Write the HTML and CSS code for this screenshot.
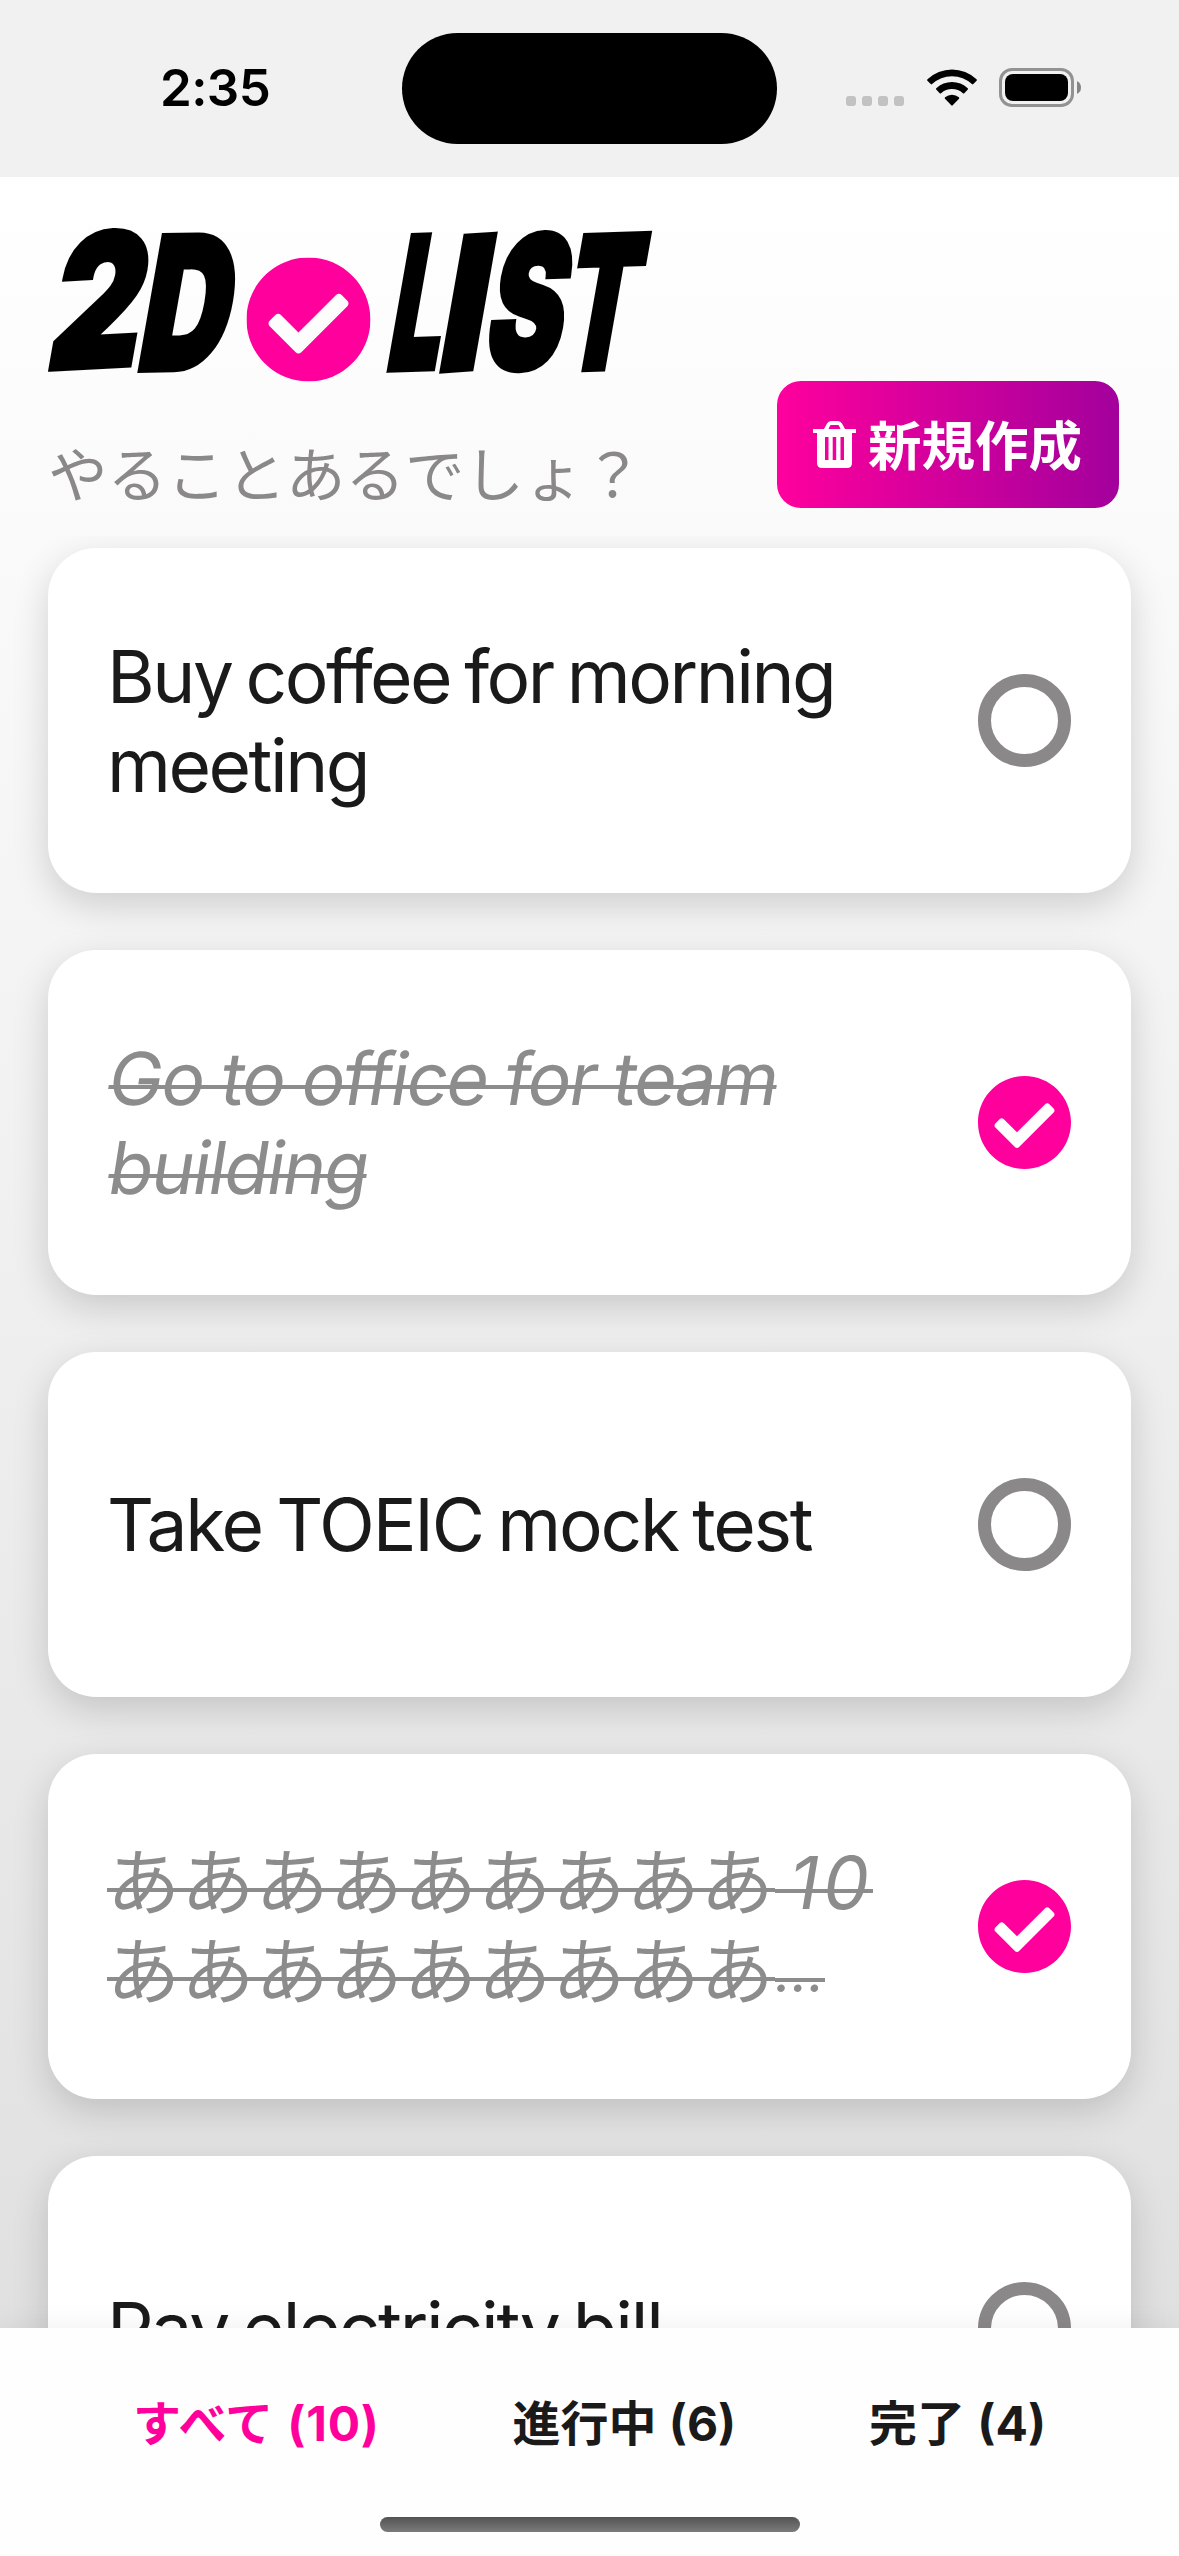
FILE: index.html
```html
<!DOCTYPE html>
<html lang="ja">
<head>
<meta charset="utf-8">
<title>2D LIST</title>
<link rel="stylesheet" href="styles.css">
</head>
<body>
<svg class="defs" aria-hidden="true">
  <symbol id="check" viewBox="8 8 496 496"><path d="M504 256c0 136.967-111.033 248-248 248S8 392.967 8 256 119.033 8 256 8s248 111.033 248 248zM227.314 387.314l184-184c6.248-6.248 6.248-16.379 0-22.627l-22.627-22.627c-6.248-6.249-16.379-6.249-22.628 0L216 308.118l-70.059-70.059c-6.248-6.248-16.379-6.248-22.628 0l-22.627 22.627c-6.248 6.248-6.248 16.379 0 22.627l104 104c6.249 6.249 16.379 6.249 22.628.001z"/></symbol>
</svg>
<div class="screen">
  <div class="status">
    <span class="time">2:35</span>
    <span class="island"></span>
    <div class="indicators">
      <svg class="dots" width="58" height="10" viewBox="0 0 58 10"><rect width="10" height="10" rx="3"/><rect x="16" width="10" height="10" rx="3"/><rect x="32" width="10" height="10" rx="3"/><rect x="48" width="10" height="10" rx="3"/></svg>
      <svg class="wifi" width="50" height="37" viewBox="0 0 50 37"><path d="M.4 11.8Q-.3 11 .5 10.200A35.500 35.500 0 0 1 49.500 10.200Q50.300 11 49.600 11.800L46.300 15.100Q45.600 15.700 44.900 15.100A29 29 0 0 0 5.100 15.100Q4.400 15.700 3.700 15.100Z"/><path d="M9.200 20.600Q8.500 19.900 9.300 19.200A23 23 0 0 1 40.700 19.200Q41.500 19.900 40.800 20.600L37.300 24.200Q36.600 24.800 35.900 24.200A16.300 16.300 0 0 0 14.100 24.200Q13.400 24.800 12.700 24.200Z"/><path d="M18 29.700Q17.300 29 18.100 28.300A10.500 10.500 0 0 1 31.900 28.300Q32.700 29 32 29.700L25.700 36.300Q25 37 24.300 36.300Z"/></svg>
      <svg class="battery" width="83" height="39" viewBox="0 0 83 39"><rect class="shell" x="1.500" y="1.500" width="72" height="36" rx="11.500"/><rect x="6" y="6" width="63" height="27" rx="8"/><path class="nub" d="M78 13Q82 15 82 19.500Q82 24 78 26Z"/></svg>
    </div>
  </div>
  <header class="header">
    <div class="brand">
      <svg class="logo" width="608" height="154" viewBox="0 0 608 154">
        <g class="word">
          <text transform="translate(-4 139) skewX(-10) skewY(-3) scale(.76 1)">2</text>
          <text transform="translate(86 140) skewX(-10) skewY(-1) scale(.67 1)">D</text>
          <text transform="translate(336 140) skewX(-10) skewY(-2) scale(.5 1)">L</text>
          <text transform="translate(387 141) skewX(-10) skewY(-4) scale(.8 1)">I</text>
          <text transform="translate(433 140) skewX(-10) skewY(-2) scale(.62 1)">S</text>
          <text transform="translate(510 140) skewX(-10) skewY(-2) scale(.56 1)">T</text>
        </g>
        <use class="tick" href="#check" x="198.500" y="27.500" width="124" height="124"/>
      </svg>
      <p class="tagline">やることあるでしょ？</p>
    </div>
    <button class="create">
      <svg width="43" height="48" viewBox="0 0 43 48"><path fill-rule="evenodd" d="M0 8h11l3-5.500Q15.500 0 18 0h7q2.500 0 4 2.500L32 8h11v4h-4v30q0 5-5 5H9q-5 0-5-5V12H0ZM15.500 8h12L26 4.700Q25.700 4 25 4h-7q-.7 0-1 .7ZM12 16v23h3.500V16ZM19.700 16v23h3.500V16ZM27.500 16v23H31V16Z"/></svg>
      <span>新規作成</span>
    </button>
  </header>
  <main class="list">
    <article class="card"><p class="tight">Buy coffee for morning<br>meeting</p><span class="ring"></span></article>
    <article class="card done"><p><s class="latin">Go to office for team</s><br><s class="latin">building</s></p><svg class="tick" width="93" height="93"><use href="#check"/></svg></article>
    <article class="card"><p>Take TOEIC mock test</p><span class="ring"></span></article>
    <article class="card done"><p><s class="kana">あああああああああ</s><s class="num"> 10</s><br><s class="kana">あああああああああ</s><s class="more">…</s></p><svg class="tick" width="93" height="93"><use href="#check"/></svg></article>
    <article class="card"><p>Pay electricity bill</p><span class="ring"></span></article>
  </main>
  <nav class="tabs">
    <div class="tab-row">
      <a class="tab active">すべて (10)</a>
      <a class="tab">進行中 (6)</a>
      <a class="tab">完了 (4)</a>
    </div>
    <div class="home"></div>
  </nav>
</div>
</body>
</html>
```
FILE: styles.css
```css
* { box-sizing: border-box; }
body { margin: 0; font-family: Inter, "Noto Sans CJK JP", sans-serif; color: #1a1a1a; }
.defs { position: absolute; width: 0; height: 0; }
.screen {
  width: 1179px; height: 2556px; overflow: hidden;
  display: flex; flex-direction: column;
  background: linear-gradient(#fff 177px, #e0e0e0 2328px);
}
.status {
  height: 177px; flex: none; background: #f1f1f1;
  display: grid; grid-template-columns: 402px 375px 1fr; align-items: start;
}
.time { padding: 57px 0 0 160px; font-size: 51px; line-height: 62px; font-weight: 600; letter-spacing: -.6px; color: #000; }
.island { height: 111px; margin-top: 33px; border-radius: 56px; background: #000; }
.indicators { display: flex; align-items: flex-end; height: 107px; padding-left: 69px; }
.dots { fill: #c2c2c2; margin: 0 23px 1px 0; }
.wifi { margin: 0 22px 1px 0; }
.shell { fill: none; stroke: #929292; stroke-width: 3; }
.nub { fill: #858585; }
.header {
  height: 359px; flex: none; padding: 53px 60px 28px 48px;
  display: flex; justify-content: space-between; align-items: flex-end;
}
.brand { align-self: flex-start; }
.logo { display: block; overflow: visible; }
.word { font-family: Inter, sans-serif; font-weight: 900; font-size: 184px; fill: #000; stroke: #000; stroke-width: 6; }
.tick { fill: #ff009d; flex: none; }
.tagline { margin: 43px 0 0; font-size: 59.500px; line-height: 88px; color: #8a8888; font-family: "Noto Sans CJK JP", sans-serif; }
.create {
  width: 342px; height: 127px; border: 0; padding: 0 0 0 36px; border-radius: 24px;
  display: flex; align-items: center; gap: 12px; color: #fff; fill: #fff;
  font: 700 53.500px/72px "Noto Sans CJK JP", sans-serif;
  background: linear-gradient(90deg, #ff009d, #a3009c);
}
.create span { padding-bottom: 3px; }
.list { flex: 1; min-height: 0; overflow: hidden; padding: 12px 48px 0; display: flex; flex-direction: column; gap: 57px; }
.card {
  height: 345px; flex: none; padding: 0 60px 0 59px; border-radius: 48px; background: #fff;
  display: flex; align-items: center; justify-content: space-between;
  box-shadow: 0 12px 36px rgba(0, 0, 0, .16);
}
.card p { margin: 0; font-size: 73px; line-height: 89px; letter-spacing: -2.200px; word-spacing: -4px; white-space: nowrap; }
.card .tight { letter-spacing: -2.500px; }
.card.done p { color: #8c8c8c; font-style: italic; }
/* The strike sits a little below the font's own line-through position. */
.done s {
  display: inline-block; height: 89px; vertical-align: top; text-decoration: none; white-space: pre;
  background: linear-gradient(#8c8c8c, #8c8c8c) 0 51px / 100% 4px no-repeat;
}
/* Slanted upright letters rather than the true italic, whose f descends. */
.done .latin { font-style: normal; transform: skewX(-9deg); transform-origin: 0 70%; letter-spacing: -1.900px; word-spacing: -1px; }
.done .kana { letter-spacing: 1.200px; font-style: normal; background-position-y: 50px; }
.done .num { letter-spacing: 4px; word-spacing: -10px; }
.done .more { font-size: 58px; width: 50px; letter-spacing: 0; }
.ring { width: 93px; height: 93px; flex: none; border: 13px solid #8a8888; border-radius: 50%; }
.tabs {
  height: 228px; flex: none; background: #fefefe; position: relative;
  display: flex; flex-direction: column; align-items: center; justify-content: space-between;
  padding: 60px 0 24px; box-shadow: 0 -3px 24px rgba(0, 0, 0, .06);
}
.tab-row { width: 100%; padding: 0 133px; display: flex; justify-content: space-between; font-size: 48px; line-height: 72px; font-weight: 700; word-spacing: 1px; }
.tab { white-space: pre; }
.active { color: #ff009d; letter-spacing: .8px; }
.home { width: 420px; height: 15px; border-radius: 8px; background: linear-gradient(#535353, #7b7b7b); }
```
